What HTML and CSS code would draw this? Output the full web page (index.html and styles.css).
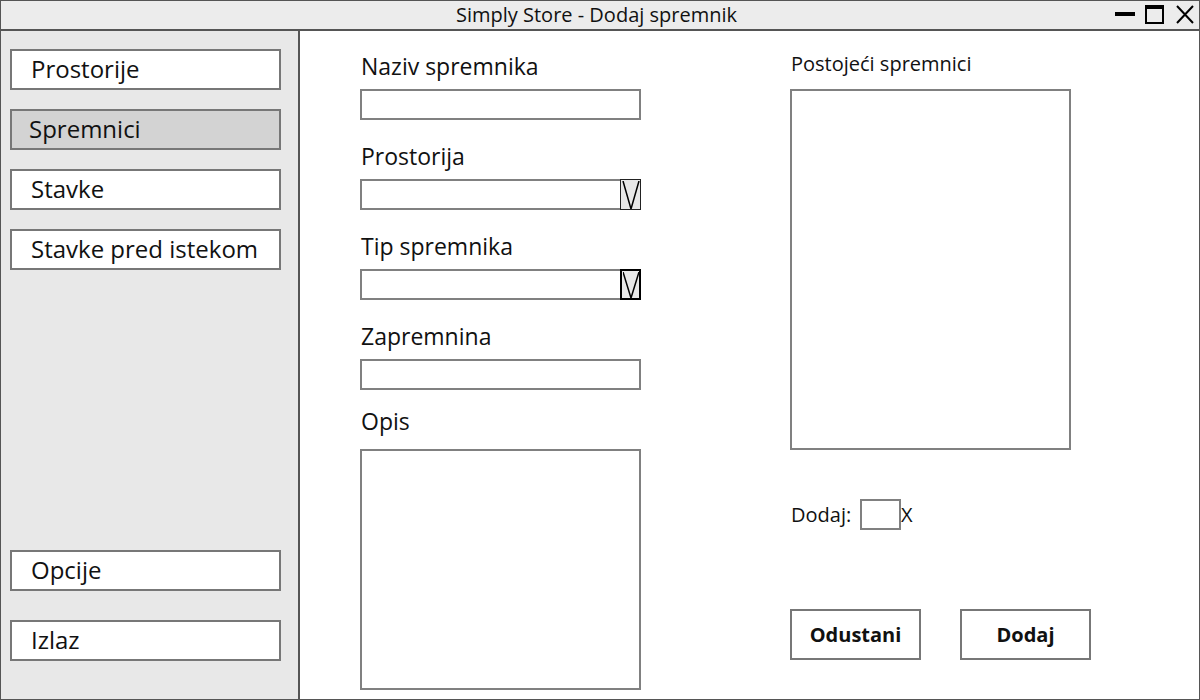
FILE: index.html
```html
<!DOCTYPE html>
<html>
<head>
<meta charset="utf-8">
<link rel="stylesheet" href="styles.css">
</head>
<body>
<div class="window">
  <div class="titlebar">
    <div></div>
    <div class="title">Simply Store - Dodaj spremnik</div>
    <div class="controls">
      <svg width="80" height="20" viewBox="0 0 80 20">
        <rect x="0" y="7" width="20" height="4" fill="#000"/>
        <rect x="31" y="1" width="17" height="17" fill="none" stroke="#000" stroke-width="2"/>
        <rect x="30" y="0" width="19" height="4" fill="#000"/>
        <path d="M62 1 L78 18 M78 1 L62 18" stroke="#000" stroke-width="2" fill="none"/>
      </svg>
    </div>
  </div>
  <div class="body">
    <nav class="sidebar">
      <div class="nav-top">
        <div class="nav-btn">Prostorije</div>
        <div class="nav-btn active">Spremnici</div>
        <div class="nav-btn">Stavke</div>
        <div class="nav-btn">Stavke pred istekom</div>
      </div>
      <div class="nav-bottom">
        <div class="nav-btn">Opcije</div>
        <div class="nav-btn">Izlaz</div>
      </div>
    </nav>
    <main class="main">
      <section class="form">
        <div class="field">
          <div class="label">Naziv spremnika</div>
          <div class="input"></div>
        </div>
        <div class="field">
          <div class="label">Prostorija</div>
          <div class="select">
            <div class="select-box"></div>
            <div class="arrow"><svg width="18" height="28" viewBox="0 0 18 28"><path d="M1 0 L9 28 L17 0" fill="none" stroke="#000" stroke-width="1.5"/></svg></div>
          </div>
        </div>
        <div class="field">
          <div class="label">Tip spremnika</div>
          <div class="select">
            <div class="select-box"></div>
            <div class="arrow strong"><svg width="16" height="26" viewBox="0 0 16 26"><path d="M0 0 L8 26 L16 0" fill="none" stroke="#000" stroke-width="1.5"/></svg></div>
          </div>
        </div>
        <div class="field">
          <div class="label">Zapremnina</div>
          <div class="input"></div>
        </div>
        <div class="field opis">
          <div class="label">Opis</div>
          <div class="textarea"></div>
        </div>
      </section>
      <section class="side">
        <div class="side-label">Postojeći spremnici</div>
        <div class="list"></div>
        <div class="add-row">
          <span class="add-label">Dodaj:</span>
          <div class="small-box"></div>
          <span class="x">X</span>
        </div>
        <div class="buttons">
          <div class="btn">Odustani</div>
          <div class="btn">Dodaj</div>
        </div>
      </section>
    </main>
  </div>
</div>
</body>
</html>
```

FILE: styles.css
```css
* { box-sizing: border-box; }
html, body { margin: 0; padding: 0; }
body {
  font-family: "Open Sans", "Noto Sans", sans-serif;
  color: #111;
  background: #fff;
}
.window {
  width: 1200px;
  height: 700px;
  border: 1px solid #555;
  display: flex;
  flex-direction: column;
  background: #fff;
}
.titlebar {
  height: 30px;
  flex: none;
  border-bottom: 2px solid #555;
  background: #ececec;
  display: grid;
  grid-template-columns: 1fr auto 1fr;
  align-items: center;
}
.title {
  font-size: 20px;
  line-height: 28px;
  padding-right: 7px;
}
.controls {
  justify-self: end;
  padding-right: 4px;
  height: 20px;
  align-self: start;
  margin-top: 4px;
}
.controls svg { display: block; }
.body {
  flex: 1;
  display: flex;
  min-height: 0;
}
.sidebar {
  width: 299px;
  flex: none;
  background: #e8e8e8;
  border-right: 2px solid #555;
  padding: 18px 0 38px 9px;
  display: flex;
  flex-direction: column;
  justify-content: space-between;
}
.nav-top, .nav-bottom {
  display: flex;
  flex-direction: column;
}
.nav-top { gap: 19px; }
.nav-bottom { gap: 29px; }
.nav-btn {
  width: 271px;
  height: 41px;
  border: 2px solid #777;
  background: #fff;
  font-size: 24px;
  line-height: 36px;
  padding-left: 19px;
}
.nav-btn.active {
  background: #d3d3d3;
  padding-left: 17px;
}
.main {
  flex: 1;
  display: flex;
  padding: 21px 0 0 60px;
  gap: 149px;
}
.form {
  width: 281px;
  display: flex;
  flex-direction: column;
}
.field { margin-bottom: 22px; }
.label {
  font-size: 23px;
  line-height: 28px;
  height: 28px;
  margin-bottom: 9px;
  padding-left: 1px;
}
.field.opis { margin-top: -5px; }
.field.opis .label { margin-bottom: 14px; }
.input {
  height: 31px;
  border: 2px solid #808080;
  background: #fff;
}
.select {
  height: 31px;
  display: flex;
}
.select-box {
  flex: 1;
  border: 2px solid #808080;
  border-right: none;
}
.arrow {
  width: 21px;
  height: 31px;
  border: 1px solid #222;
  background: #e8e8e8;
  display: flex;
  align-items: center;
  justify-content: center;
}
.arrow svg { display: block; }
.arrow.strong { border: 2px solid #000; }
.textarea {
  height: 241px;
  border: 2px solid #808080;
}
.side {
  width: 310px;
  display: flex;
  flex-direction: column;
}
.side-label {
  font-size: 20px;
  line-height: 24px;
  margin-bottom: 13px;
  padding-left: 1px;
}
.list {
  width: 281px;
  height: 361px;
  border: 2px solid #808080;
}
.add-row {
  margin-top: 49px;
  display: flex;
  align-items: center;
  height: 31px;
  font-size: 20px;
}
.add-label { padding-left: 1px; width: 70px; flex: none; }
.small-box {
  width: 41px;
  height: 31px;
  border: 2px solid #808080;
  flex: none;
}
.buttons {
  margin-top: 79px;
  display: flex;
  gap: 39px;
}
.btn {
  width: 131px;
  height: 51px;
  border: 2px solid #777;
  font-size: 20px;
  font-weight: bold;
  display: flex;
  align-items: center;
  justify-content: center;
}
```
